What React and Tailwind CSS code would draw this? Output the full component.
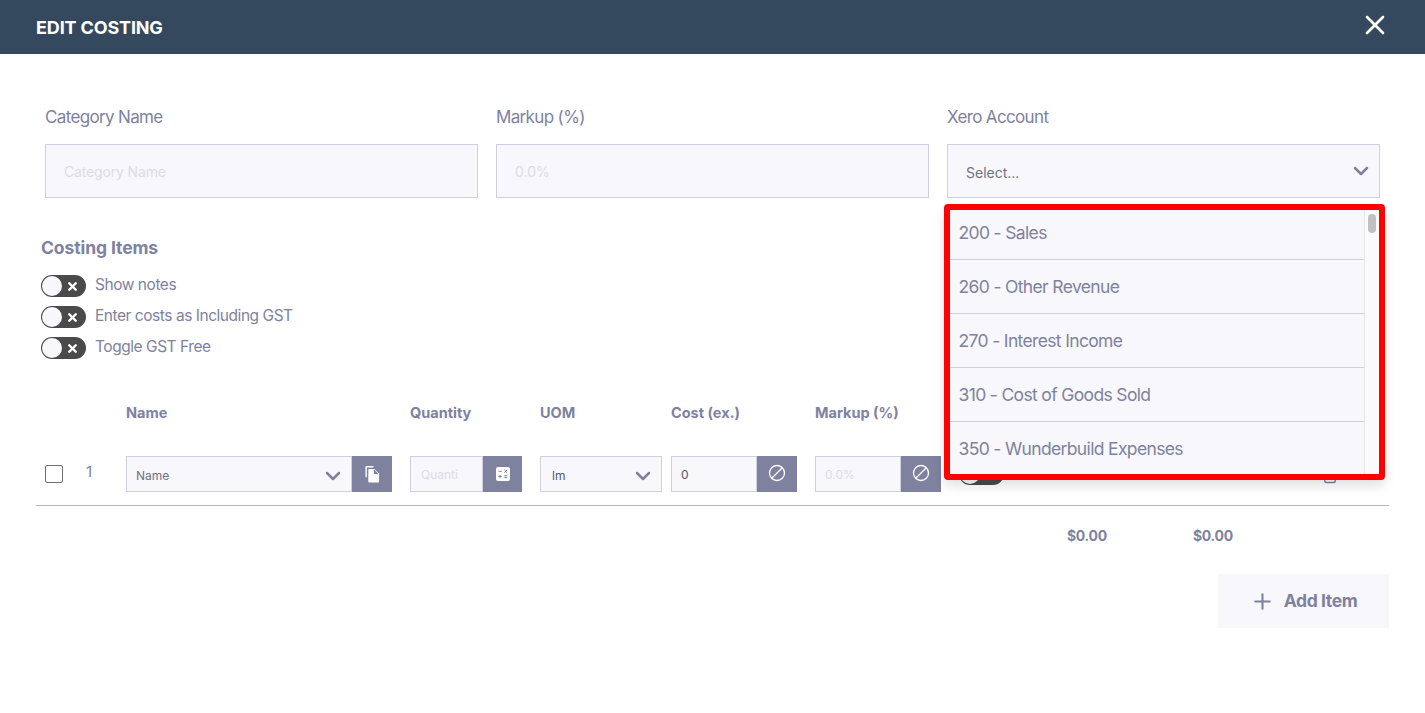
import React from "react";
import { Ban, ChevronDown, Plus, Trash2, X } from "lucide-react";

const rowGrid = "grid grid-cols-[90px_284px_130px_131px_144px_145px_1fr]";

const Toggle = () => (
  <div className="flex h-[22px] w-[45px] shrink-0 items-center rounded-full bg-[#4a4a4a] pl-px">
    <div className="h-5 w-5 rounded-full bg-[#f7f7fc]" />
    <X className="ml-1 h-[13px] w-[13px] text-white" strokeWidth={4.5} />
  </div>
);

const CopyIcon = () => (
  <svg viewBox="0 0 16 18" className="h-[17px] w-[15px]" fill="#fff">
    <path d="M1.500 0H9v1.500H2V12H.5V1A1 1 0 0 1 1.500 0Z" />
    <path d="M4.500 3H10l5 5v8.500a1 1 0 0 1-1 1H4.500a1 1 0 0 1-1-1V4a1 1 0 0 1 1-1Z" />
    <path d="M9.500 3.500V8.500H14.500" fill="#7e829f" />
  </svg>
);

const CalcIcon = () => (
  <svg viewBox="0 0 14 14" className="h-[14px] w-[14px]">
    <rect width="14" height="14" rx="2" fill="#fff" />
    <path d="M2.500 4.300h3.200M8.400 3l2.600 2.600M11 3 8.400 5.600M2.500 9.500h3.200M4.100 7.900v3.200M8.300 8.700h3M8.300 10.500h3" stroke="#7e829f" strokeWidth="1" fill="none" />
  </svg>
);

const Chevron = () => <ChevronDown className="h-6 w-6 shrink-0 text-[#7e829f]" strokeWidth={2.5} />;

const SideButton = ({ children, className }) => (
  <div className={`flex h-9 items-center justify-center bg-[#7e829f] ${className}`}>{children}</div>
);

const SlashIcon = () => <Ban className="h-[18px] w-[18px] -scale-x-100 text-white" strokeWidth={1.75} />;

const LabeledField = ({ label, children }) => (
  <div>
    <div className="mb-[15px] h-6 text-[17px] leading-6 tracking-[-0.65px] text-[#7e829f]">{label}</div>
    {children}
  </div>
);

const accounts = [
  "200 - Sales",
  "260 - Other Revenue",
  "270 - Interest Income",
  "310 - Cost of Goods Sold",
  "350 - Wunderbuild Expenses",
];

export default function App() {
  return (
    <div className="relative h-[713px] overflow-hidden bg-white font-['Inter',sans-serif]">
      {/* Header */}
      <div className="flex h-[54px] items-center justify-between bg-[#34495e] pl-9 pr-[34px]">
        <h1 className="pt-px text-[18px] font-bold tracking-[-0.15px] text-white">EDIT COSTING</h1>
        <X className="mb-1 h-8 w-8 text-white" strokeWidth={2} />
      </div>

      <div className="px-9 pt-[51px]">
        {/* Top fields */}
        <div className="mx-[9px] grid grid-cols-3 gap-[18px]">
          <LabeledField label="Category Name">
            <div className="flex h-[54px] items-center border border-[#d0cfe2] bg-[#f7f7fc] pl-[18px] text-[14px] tracking-[-0.15px] text-[#dcdce6]">
              Category Name
            </div>
          </LabeledField>
          <LabeledField label="Markup (%)">
            <div className="flex h-[54px] items-center border border-[#d0cfe2] bg-[#f7f7fc] pl-[18px] text-[14px] text-[#dcdce6]">
              0.0%
            </div>
          </LabeledField>
          <LabeledField label="Xero Account">
            <div className="flex h-[54px] items-center justify-between border border-[#d0cfe2] bg-[#f7f7fc] pl-[18px] pr-[6px] text-[14px] text-[#6f7283]">
              <span className="pt-0.5">Select...</span>
              <Chevron />
            </div>
          </LabeledField>
        </div>

        {/* Costing Items */}
        <h2 className="mt-[38px] mb-[15px] ml-[5px] h-6 text-[17.500px] font-bold leading-6 tracking-[-0.1px] text-[#7e829f]">Costing Items</h2>
        <div className="ml-[5px] flex flex-col gap-[9px]">
          {["Show notes", "Enter costs as Including GST", "Toggle GST Free"].map((t) => (
            <div key={t} className="flex h-[22px] items-center gap-[9px] text-[15.500px] tracking-[-0.46px] text-[#7e829f]">
              <Toggle />
              <span className="-mt-0.5">{t}</span>
            </div>
          ))}
        </div>

        {/* Table head */}
        <div className={`${rowGrid} mt-[44px] mb-[33px] h-5 text-[14.500px] font-bold leading-5 text-[#7e829f]`}>
          <div />
          <div>Name</div>
          <div>Quantity</div>
          <div>UOM</div>
          <div>Cost (ex.)</div>
          <div>Markup (%)</div>
        </div>

        {/* Item row */}
        <div className={`${rowGrid} h-9 items-center`}>
          <div className="flex items-center">
            <div className="ml-[9px] h-[18px] w-[18px] rounded-[2px] border border-[#6f6f6f]" />
            <span className="ml-[23px] -mt-1 text-[15px] text-[#7e829f]">1</span>
          </div>
          <div className="flex w-[266px]">
            <div className="flex h-9 flex-1 items-center justify-between border border-[#d0cfe2] bg-[#f7f7fc] pl-[9px] pr-[6px] pt-1 text-[12px] text-[#6f7283]">
              Name
              <Chevron />
            </div>
            <SideButton className="w-10"><CopyIcon /></SideButton>
          </div>
          <div className="flex w-[112px]">
            <div className="flex h-9 flex-1 items-center overflow-hidden border border-[#d0cfe2] bg-[#f7f7fc] pl-[10px] pt-0.5 text-[12px] text-[#dcdce6]">
              Quanti
            </div>
            <SideButton className="w-[39px]"><CalcIcon /></SideButton>
          </div>
          <div className="flex h-9 w-[122px] items-center justify-between border border-[#d0cfe2] bg-[#f7f7fc] pl-[11px] pr-[6px] pt-1 text-[12px] text-[#55586a]">
            lm
            <Chevron />
          </div>
          <div className="flex w-[126px]">
            <div className="flex h-9 flex-1 items-center border border-[#d0cfe2] bg-[#f7f7fc] pl-[9px] pt-0.5 text-[12px] text-[#55586a]">0</div>
            <SideButton className="w-10 pb-[3px]"><SlashIcon /></SideButton>
          </div>
          <div className="flex w-[126px]">
            <div className="flex h-9 flex-1 items-center border border-[#d0cfe2] bg-[#f7f7fc] pl-[9px] pt-0.5 text-[12px] text-[#dcdce6]">0.0%</div>
            <SideButton className="w-10 pb-[3px]"><SlashIcon /></SideButton>
          </div>
          <div className="flex items-center justify-between pr-[50px]">
            <div className="-ml-px"><Toggle /></div>
            <Trash2 className="mt-0.5 h-[18px] w-[18px] text-[#7e829f]" />
          </div>
        </div>
        <div className="mt-[13px] border-t border-[#b3b4c8]" />

        {/* Totals */}
        <div className="mt-5 flex h-5 justify-end pr-[70px] text-[14px] font-bold leading-5 tracking-[-0.3px] text-[#7e829f]">
          <div className="w-[126px]">$0.00</div>
          <div className="w-[126px]">$0.00</div>
        </div>

        {/* Add item */}
        <div className="mt-7 flex justify-end">
          <div className="flex h-[54px] w-[171px] items-center justify-center gap-[9px] bg-[#f7f7fc] text-[17.500px] font-bold tracking-[-0.4px] text-[#7e829f]">
            <Plus className="h-[25px] w-[25px]" strokeWidth={2} />
            Add Item
          </div>
        </div>
      </div>

      {/* Open Xero Account list, outlined in red */}
      <div className="absolute left-[944px] top-[204px] h-[276px] w-[441px] overflow-hidden rounded-[4px] border-[6px] border-[#ff0000] shadow-[0_6px_12px_rgba(0,0,0,0.12)]">
        <div className="flex h-full">
          <div className="-mt-1 flex-1">
            {accounts.map((a) => (
              <div
                key={a}
                className="flex h-[54px] items-center border-b border-[#d0cfe2] bg-[#f7f7fc] pl-[8.500px] pt-0.5 text-[17.500px] tracking-[-0.65px] text-[#7e829f]"
              >
                {a}
              </div>
            ))}
          </div>
          <div className="w-[15px] border-l border-[#e6e6ea] bg-[#fafafa] pl-[3px] pt-1">
            <div className="h-[19px] w-2 rounded-full bg-[#c1c1c1]" />
          </div>
        </div>
      </div>
    </div>
  );
}
